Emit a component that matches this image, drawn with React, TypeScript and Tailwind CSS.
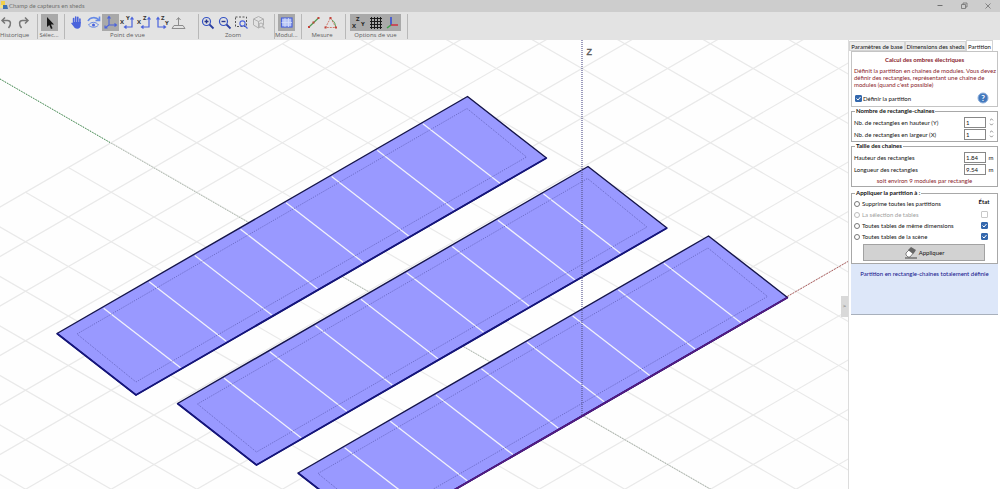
import type { ReactNode } from 'react'
import { ChevronDown, ChevronUp } from 'lucide-react'

const BLUE = '#4a63dc'

// scene geometry: the origin is where the three axes meet
const OX = 582
const OY = 415
const DX = 42.8
const DY = 24.75

type Point = [number, number]

const toPoints = (pts: Point[]) => pts.map((p) => p.join(',')).join(' ')

function GroundGrid() {
  const lines: ReactNode[] = []
  for (let j = -11; j <= 14; j++) {
    lines.push(
      <line key={`a${j}`} x1={OX + (j - 20) * DX} y1={OY + (j + 20) * DY} x2={OX + (j + 24) * DX} y2={OY + (j - 24) * DY} />,
    )
  }
  for (let i = -12; i <= 16; i++) {
    lines.push(
      <line key={`b${i}`} x1={OX + (i - 11) * DX} y1={OY + (-11 - i) * DY} x2={OX + (i + 20) * DX} y2={OY + (20 - i) * DY} />,
    )
  }
  return <g stroke="#e9e9e9" strokeWidth="1.2">{lines}</g>
}

function Shed({ x, y, frontAxis }: { x: number; y: number; frontAxis?: boolean }) {
  const outer: Point[] = [[0, 0], [410.5, -237], [489.5, -175.5], [79, 61.5]]
  const inner: Point[] = [[20, 0.5], [410, -225], [469.5, -176.5], [79, 48.5]]
  const modules = [1, 2, 3, 4, 5, 6, 7, 8]
  return (
    <g transform={`translate(${x} ${y})`}>
      <polygon points={toPoints(outer)} fill="#9999ff" />
      <g stroke="#f1f1fb" strokeWidth="1.3">
        {modules.map((m) => {
          const mx = (410.5 / 9) * m
          const my = (-237 / 9) * m
          return <line key={m} x1={mx + 1} y1={my + 1} x2={mx + 78} y2={my + 60.5} />
        })}
      </g>
      <polygon points={toPoints(inner)} fill="none" stroke="#5c5cb4" strokeWidth="0.8" strokeDasharray="1 1.2" />
      <polygon points={toPoints(outer)} fill="none" stroke="#15154a" strokeWidth="1.4" strokeLinejoin="round" />
      <polyline points={toPoints([outer[0], outer[3], outer[2]])} fill="none" stroke="#14147c" strokeWidth="1.8" />
      {frontAxis && <line x1="79" y1="61.5" x2="489.5" y2="-175.5" stroke="#541a80" strokeWidth="1.8" />}
    </g>
  )
}

function Scene() {
  return (
    <svg viewBox="0 40 848 449" preserveAspectRatio="xMinYMin slice" className="min-w-0 flex-1 bg-[#fefefe]">
      <GroundGrid />
      <line x1="0" y1="79" x2={OX} y2={OY} stroke="#9fae9f" strokeWidth="1" strokeDasharray="1 1" />
      <line x1="0" y1="79" x2="110" y2="142.5" stroke="#3f9150" strokeWidth="1" strokeDasharray="1 1" />
      <line x1={OX} y1={OY} x2="712" y2="490" stroke="#96a396" strokeWidth="1" strokeDasharray="1 1" />
      <line x1={OX} y1={OY} x2="848" y2="261.5" stroke="#b06060" strokeWidth="1" strokeDasharray="2 1" />
      <Shed x={57} y={333.5} />
      <Shed x={177.5} y={403.5} />
      <Shed x={298} y={473} frontAxis />
      <line x1={OX} y1="40" x2={OX} y2={OY} stroke="#5a5a92" strokeWidth="1.2" strokeDasharray="1 1" />
      <text x="586.5" y="54.5" fontSize="9" fill="#555" stroke="#555" strokeWidth="0.3" fontFamily="Liberation Sans, sans-serif">Z</text>
    </svg>
  )
}

function Glyph({ children }: { children: ReactNode }) {
  return (
    <svg viewBox="0 0 17 17" className="h-[17px] w-[17px] shrink-0" fill="none" stroke={BLUE} strokeWidth="1.2">
      {children}
    </svg>
  )
}

function ToolButton({ label, active, children }: { label: string; active?: boolean; children: ReactNode }) {
  return (
    <button type="button" aria-label={label} className={active ? 'shrink-0 bg-[#a9a9a9]' : 'shrink-0'}>
      <Glyph>{children}</Glyph>
    </button>
  )
}

function ToolGroup({ label, className, children }: { label: string; className: string; children: ReactNode }) {
  return (
    <div className={`flex shrink-0 flex-col border-r border-[#b8b8b8] ${className}`}>
      <div className="flex justify-center">{children}</div>
      <span className="text-center text-[6px] leading-[8px] whitespace-nowrap text-[#5c5c5c]">{label}</span>
    </div>
  )
}

function Axes({ a, b, flip }: { a: string; b: string; flip?: boolean }) {
  return (
    <>
      <path d={flip ? 'M5 4v9h7M3.5 5.5 5 3.5l1.5 2M10.5 11.5l2 1.5-2 1.5' : 'M13 4v9H6M11.5 5.5 13 3.5l1.5 2M7.5 11.5l-2 1.5 2 1.5'} />
      <g fill="#333" stroke="none" fontSize="6" fontWeight="700">
        <text x={flip ? 8 : 1} y={flip ? 6 : 10}>{a}</text>
        <text x={flip ? 12 : 7} y={flip ? 11 : 6}>{b}</text>
      </g>
    </>
  )
}

function Magnifier({ minus }: { minus?: boolean }) {
  return (
    <>
      <circle cx="7.5" cy="7.5" r="4" stroke="#3452c4" />
      <path d="m10.5 10.5 4 4" stroke="#2b3fa0" strokeWidth="1.8" />
      <path d={minus ? 'M5.5 7.5h4' : 'M5.5 7.5h4M7.5 5.5v4'} stroke="#26368c" strokeWidth="1.4" />
    </>
  )
}

function Toolbar() {
  return (
    <div className="flex h-7 shrink-0 overflow-hidden bg-[#e3e3e3] pt-[2px] pb-[1px]">
      <ToolGroup label="Historique" className="w-[38px] pr-2">
        <ToolButton label="Annuler">
          <path d="M4 6.5h5.5c3.5 0 4 4 1 7.5M7 3.5l-3 3 3 3" stroke="#777" strokeWidth="1.5" />
        </ToolButton>
        <ToolButton label="Rétablir">
          <path d="M13 6.5H7.5c-3.5 0-4 4-1 7.5M10 3.5l3 3-3 3" stroke="#777" strokeWidth="1.5" />
        </ToolButton>
      </ToolGroup>
      <ToolGroup label="Sélec..." className="w-[27px] pr-1">
        <ToolButton label="Sélection" active>
          <path d="M6 3v10l2.3-2 1.7 4 1.6-.7-1.7-3.8h3.1z" fill="#161616" stroke="none" />
        </ToolButton>
      </ToolGroup>
      <ToolGroup label="Point de vue" className="pr-[11px] pl-[3px]">
        <ToolButton label="Déplacer">
          <path d="M5.6 9V4.5M7.7 8V3M9.8 8V3.3M11.9 9V5" strokeWidth="1.6" strokeLinecap="round" />
          <path d="M4.8 8h7.900v3c0 2.500-1.500 3.800-3.200 3.800-2.300 0-3.300-1.300-4-2.500L3.100 9.200l1-.7 1.200 1z" fill={BLUE} stroke="none" />
        </ToolButton>
        <ToolButton label="Tourner">
          <path d="M3 7c2-4 8-4.500 11-1M14.500 2.500v4h-4" stroke="#668ae6" strokeWidth="1.6" />
          <path d="M3.500 11c2.500-3.500 7.500-3.500 10 0-2.500 3-7.500 3-10 0z" stroke="#668ae6" strokeWidth="1" />
          <circle cx="8.5" cy="11" r="1.5" fill={BLUE} stroke="none" />
        </ToolButton>
        <ToolButton label="Perspective" active>
          <path d="M7 3v8l-4 3M7 11h7M5.500 4.500 7 2.500l1.500 2M12.500 9.500l2 1.500-2 1.500M3 11.500V14h2.500" strokeWidth="1.1" />
        </ToolButton>
        <ToolButton label="Vue de dessus"><Axes a="X" b="Y" /></ToolButton>
        <ToolButton label="Vue de face"><Axes a="X" b="Z" /></ToolButton>
        <ToolButton label="Vue de côté"><Axes a="Z" b="Y" flip /></ToolButton>
        <ToolButton label="Vue du sol">
          <path d="M8.500 12V4M6.500 6l2-2.500 2 2.500M4 11.500h9l2 3H2z" stroke="#8c8c8c" strokeWidth="1" />
        </ToolButton>
      </ToolGroup>
      <ToolGroup label="Zoom" className="pr-[7px]">
        <ToolButton label="Zoom avant"><Magnifier /></ToolButton>
        <ToolButton label="Zoom arrière"><Magnifier minus /></ToolButton>
        <ToolButton label="Zoom fenêtre">
          <rect x="2.5" y="3" width="11" height="9.5" stroke="#555" strokeWidth="1" strokeDasharray="2 1.5" />
          <circle cx="9.5" cy="9.5" r="2.6" fill="#e3e3e3" strokeWidth="1.1" />
          <path d="m11.500 11.500 3 3" />
        </ToolButton>
        <ToolButton label="Zoom objet">
          <path d="m8.500 2.500 5 2.500v6l-5 3-5-3V5zM3.500 5l5 2.500 5-2.500M8.500 7.500V14" stroke="#b0b0b0" strokeWidth="1" />
          <circle cx="11" cy="11" r="2" fill="#e3e3e3" stroke="#b0b0b0" strokeWidth="1" />
          <path d="m12.500 12.500 2 2" stroke="#b0b0b0" />
        </ToolButton>
      </ToolGroup>
      <ToolGroup label="Modul..." className="w-[27px] pr-[4px]">
        <ToolButton label="Modules" active>
          <rect x="3.5" y="4" width="10.5" height="9" fill="#b9c6f5" strokeWidth="1.2" />
          <path d="M7 4v9M10.500 4v9M3.500 8.500H14" stroke="#d6def9" strokeWidth=".8" />
        </ToolButton>
      </ToolGroup>
      <ToolGroup label="Mesure" className="pr-[6px] pl-[3px]">
        <ToolButton label="Distance">
          <path d="m4 13 9.500-9" stroke="#4f9a4f" strokeWidth="1.2" />
          <path d="M3 13h2M7.500 8.500h2M12.500 4h2" stroke="#c2453d" strokeWidth="2" />
        </ToolButton>
        <ToolButton label="Angle">
          <path d="M8.500 4 3.500 13.500H14L8.500 4" stroke="#d07b6d" strokeWidth="1" strokeDasharray="2 1" />
          <path d="M10 6c2.500 1.500 3.500 4 3.500 6.500" stroke="#5ba45b" strokeWidth="1" />
          <path d="M7.500 4h2M2.500 13.500h2M13 13.500h2" stroke="#c2453d" strokeWidth="1.8" />
        </ToolButton>
      </ToolGroup>
      <ToolGroup label="Options de vue" className="pr-[6px] pl-[4px]">
        <ToolButton label="Noms des axes" active>
          <g fill="#222" stroke="none" fontSize="6" fontWeight="700">
            <text x="2" y="14">X</text>
            <text x="6" y="6.5">Z</text>
            <text x="11" y="12">Y</text>
          </g>
        </ToolButton>
        <ToolButton label="Grille" active>
          <path d="M3 4.500h12M3 7.500h12M3 10.500h12M3 13.500h12M4.500 3v12M7.500 3v12M10.500 3v12M13.500 3v12" stroke="#1b1b1b" strokeWidth="1" />
        </ToolButton>
        <ToolButton label="Axes" active>
          <path d="M7 3v8" stroke="#2f49da" strokeWidth="1.5" />
          <path d="M7 11h7" stroke="#d03040" strokeWidth="1.5" />
          <path d="m7 11-4 3" stroke="#3fa04a" strokeWidth="1.5" />
        </ToolButton>
      </ToolGroup>
    </div>
  )
}

function TitleBar() {
  return (
    <header className="flex h-3 shrink-0 items-center bg-[#cdcdcd] pr-[7px]">
      <svg viewBox="0 0 9 12" className="h-3 w-[9px]">
        <path d="M1 1h4v4H1z" fill="#f2d04a" />
        <path d="M3 5h4l1 4H3z" fill="#3e6fb2" />
        <path d="M0 5h3v3H0z" fill="#f0e28c" />
      </svg>
      <h1 className="flex-1 font-[family-name:Lato,sans-serif] text-[6px] leading-[10px] font-normal text-[#707070]">Champ de capteurs en sheds</h1>
      <div className="flex gap-[14px] text-[#707070]">
        <button type="button" aria-label="Réduire">
          <svg viewBox="0 0 10 10" className="h-[10px] w-[10px]" stroke="currentColor"><path d="M2.500 4.500h5" /></svg>
        </button>
        <button type="button" aria-label="Restaurer">
          <svg viewBox="0 0 10 10" className="h-[10px] w-[10px]" stroke="currentColor" strokeWidth=".8" fill="none">
            <path d="M2.500 3.500h4v4h-4zM4 3.500V2h4v4H6.500" />
          </svg>
        </button>
        <button type="button" aria-label="Fermer">
          <svg viewBox="0 0 10 10" className="h-[10px] w-[10px]" stroke="currentColor" strokeWidth=".8"><path d="m2.500 2.500 5 5M7.500 2.500l-5 5" /></svg>
        </button>
      </div>
    </header>
  )
}

const checkClass =
  "h-[7px] w-[7px] shrink-0 appearance-none rounded-[1px] border border-[#9a9a9a] bg-white checked:border-[#3468ad] checked:bg-[#3468ad] checked:bg-[url('data:image/svg+xml,%3Csvg%20xmlns=%22http://www.w3.org/2000/svg%22%20viewBox=%220%200%205%205%22%3E%3Cpath%20d=%22M.5%202.500l1.500%201.500%202.500-3%22%20fill=%22none%22%20stroke=%22white%22/%3E%3C/svg%3E')] disabled:border-[#c8c8c8]"

const fieldsetClass = 'mr-[2px] ml-[2px] min-w-0 border border-[#a8a8a8] px-[2px] pt-[1px]'
const legendClass = 'ml-[1px] px-[1px] leading-[8px] font-bold text-[#111]'

function CountField({ id, label }: { id: string; label: string }) {
  return (
    <div className="flex h-3 items-center">
      <label htmlFor={id} className="flex-1">{label}</label>
      <input id={id} defaultValue="1" className="h-[11px] w-[22px] border border-[#888] bg-white px-[1px] leading-[9px]" />
      <div className="ml-[1px] flex w-[8px] flex-col items-center text-[#777]">
        <button type="button" aria-label={`${label} : augmenter`}><ChevronUp strokeWidth={4} className="h-[5px] w-[5px]" /></button>
        <button type="button" aria-label={`${label} : diminuer`}><ChevronDown strokeWidth={4} className="h-[5px] w-[5px]" /></button>
      </div>
    </div>
  )
}

function SizeField({ id, label, value }: { id: string; label: string; value: string }) {
  return (
    <div className="flex h-3 items-center">
      <label htmlFor={id} className="flex-1">{label}</label>
      <input id={id} defaultValue={value} className="h-[11px] w-[22px] border border-[#888] bg-white px-[1px] leading-[9px]" />
      <span className="ml-[1px] w-[8px] text-center">m</span>
    </div>
  )
}

const targets = [
  { id: 'none', label: 'Supprime toutes les partitions' },
  { id: 'selection', label: 'La sélection de tables', state: false, disabled: true },
  { id: 'same', label: 'Toutes tables de même dimensions', state: true },
  { id: 'all', label: 'Toutes tables de la scène', state: true },
]

function PartitionPanel() {
  return (
    <aside className="flex w-[152px] shrink-0 flex-col border-l border-[#dcdcdc] bg-white font-[family-name:Lato,sans-serif] text-[6px] leading-[7px] text-[#111]">
      <div role="tablist" className="flex h-[11px] items-end whitespace-nowrap">
        <button type="button" role="tab" className="h-[10px] w-[56px] border border-[#d4d4d4] bg-[#ececec]">Paramètres de base</button>
        <button type="button" role="tab" className="h-[10px] w-[61px] border border-[#d4d4d4] bg-[#ececec]">Dimensions des sheds</button>
        <button type="button" role="tab" aria-selected className="h-[11px] w-[27px] border border-b-0 border-[#d4d4d4] bg-white">Partition</button>
      </div>
      <section className="mr-[2px] ml-[2px] border border-[#c4c4c4] px-[2px] pt-1 pb-[2px]">
        <h2 className="text-center leading-[8px] font-bold text-[#8a1c2b]">Calcul des ombres électriques</h2>
        <p className="pt-[3px] whitespace-nowrap text-[#8a1c2b]">
          Définit la partition en chaînes de modules. Vous devez<br />
          définir des rectangles, représentant une chaîne de<br />
          modules (quand c'est possible)
        </p>
        <div className="flex items-center justify-between pt-[4px] pr-[6px] pl-[1px]">
          <label className="flex items-center gap-[1px]">
            <input type="checkbox" defaultChecked className={checkClass} />
            Définir la partition
          </label>
          <button type="button" aria-label="Aide">
            <svg viewBox="0 0 12 12" className="h-3 w-3">
              <circle cx="6" cy="6" r="5" fill="#4278bd" stroke="#8fb0dc" />
              <text x="6" y="9" textAnchor="middle" fontSize="8" fontWeight="700" fill="#fff">?</text>
            </svg>
          </button>
        </div>
      </section>
      <fieldset className={`${fieldsetClass} pb-[1px]`}>
        <legend className={legendClass}>Nombre de rectangle-chaînes</legend>
        <CountField id="rows" label="Nb. de rectangles en hauteur (Y)" />
        <CountField id="cols" label="Nb. de rectangles en largeur (X)" />
      </fieldset>
      <fieldset className={fieldsetClass}>
        <legend className={legendClass}>Taille des chaînes</legend>
        <SizeField id="height" label="Hauteur des rectangles" value="1.84" />
        <SizeField id="length" label="Longueur des rectangles" value="9.54" />
        <p className="pt-[2px] pb-[1px] text-center leading-[8px] text-[#8a1c2b]">soit environ 9 modules par rectangle</p>
      </fieldset>
      <fieldset className={`${fieldsetClass} mt-[2px] pb-[2px]`}>
        <legend className={legendClass}>Appliquer la partition à :</legend>
        <div className="flex">
          <div className="flex-1">
            {targets.map((t) => (
              <label key={t.id} className={`flex h-[11px] items-center gap-[2px] ${t.disabled ? 'text-[#a0a0a0]' : ''}`}>
                <input
                  type="radio"
                  name="target"
                  disabled={t.disabled}
                  className="h-[6px] w-[6px] appearance-none rounded-full border border-[#777] bg-white checked:bg-[#3468ad] disabled:border-[#bbb]"
                />
                {t.label}
              </label>
            ))}
          </div>
          <div className="flex w-[22px] flex-col items-center">
            <span className="h-[11px] leading-[7px] font-bold">État</span>
            {targets.slice(1).map((t) => (
              <span key={t.id} className="flex h-[11px] items-center">
                <input type="checkbox" aria-label={`État : ${t.label}`} defaultChecked={t.state} disabled={t.disabled} className={checkClass} />
              </span>
            ))}
          </div>
        </div>
        <button
          type="button"
          className="mt-[2px] mr-[10px] ml-[9px] flex h-[17px] w-[122px] items-center justify-center gap-[2px] border border-[#a2a2a2] bg-[#d2d2d2]"
        >
          <svg viewBox="0 0 13 13" className="h-[13px] w-[13px]">
            <path d="m2 7 5-5 4 3-5 6H4L2 9z" fill="#fff" stroke="#555" strokeWidth=".7" />
            <path d="m7 1 5 3-3 4-5-4z" fill="#666" />
            <path d="M1 12h12" stroke="#444" />
          </svg>
          Appliquer
        </button>
      </fieldset>
      <p className="mr-[2px] ml-[2px] h-[51px] border-b border-[#a8b0bc] bg-[#dde7f9] pt-[6px] text-center text-[#10108a]">
        Partition en rectangle-chaînes totalement définie
      </p>
    </aside>
  )
}

export default function App() {
  return (
    <div className="flex min-h-screen flex-col bg-white font-[family-name:Open_Sans,Noto_Sans,sans-serif]">
      <TitleBar />
      <Toolbar />
      <main className="relative flex flex-1">
        <div className="flex min-w-0 flex-1">
          <Scene />
        </div>
        <button
          type="button"
          aria-label="Replier le panneau"
          className="absolute top-[256px] right-[152px] h-[21px] w-[7px] bg-[#d9d9d9] text-[6px] leading-[21px] text-[#555]"
        >
          &gt;
        </button>
        <PartitionPanel />
      </main>
    </div>
  )
}
